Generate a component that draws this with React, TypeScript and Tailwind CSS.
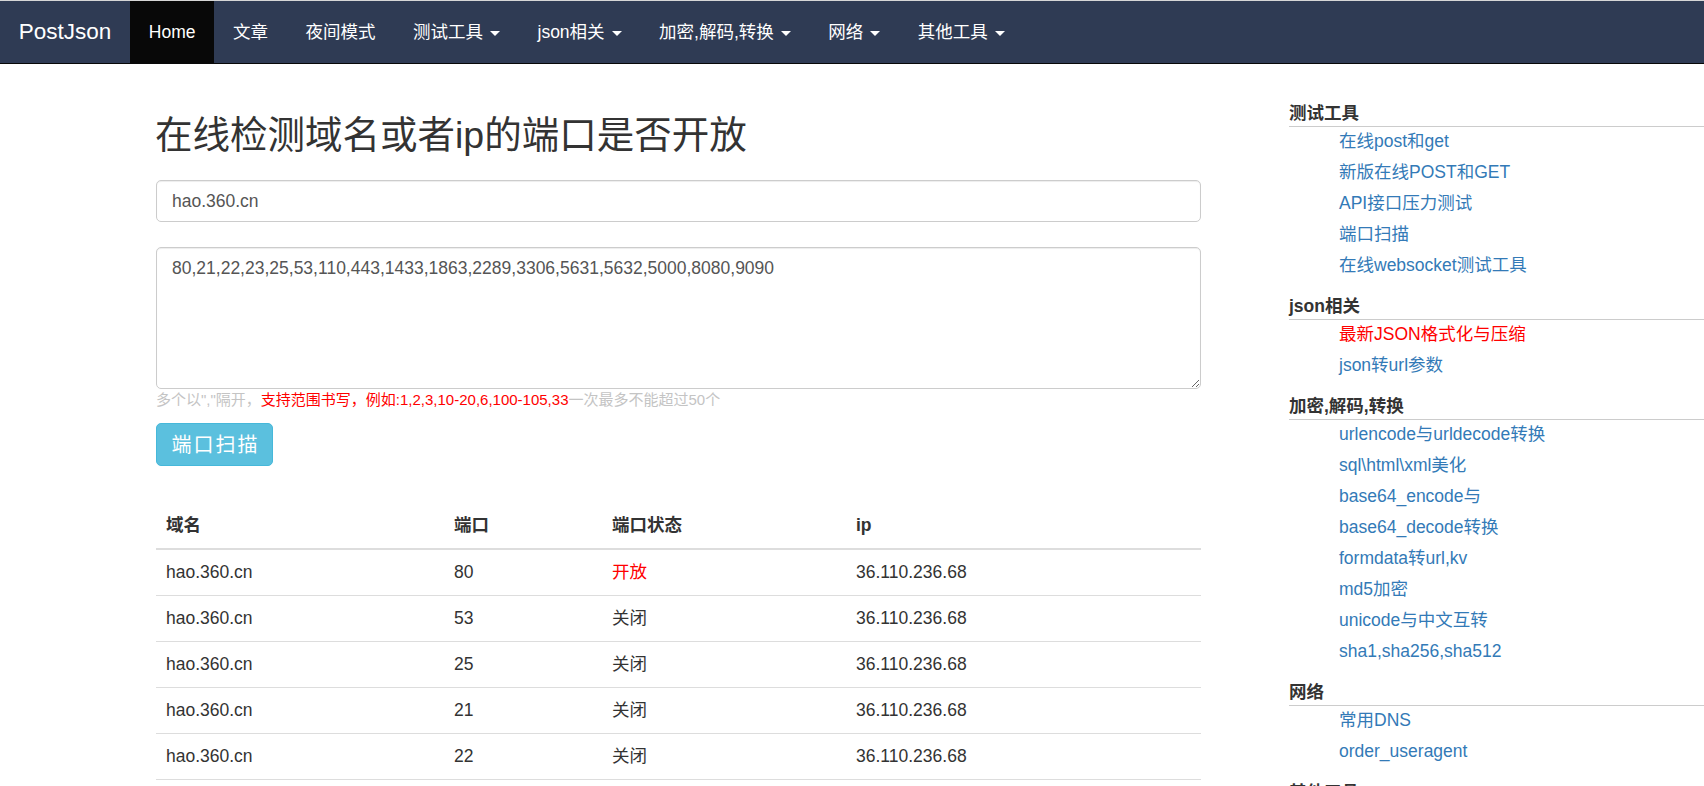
import React from "react";

const navItems = [
  { label: "文章", caret: false },
  { label: "夜间模式", caret: false },
  { label: "测试工具", caret: true },
  { label: "json相关", caret: true },
  { label: "加密,解码,转换", caret: true },
  { label: "网络", caret: true },
  { label: "其他工具", caret: true },
];

const rows = [
  { port: "80", open: true },
  { port: "53", open: false },
  { port: "25", open: false },
  { port: "21", open: false },
  { port: "22", open: false },
  { port: "23", open: false },
];

const groups = [
  {
    title: "测试工具",
    links: ["在线post和get", "新版在线POST和GET", "API接口压力测试", "端口扫描", "在线websocket测试工具"],
  },
  { title: "json相关", links: ["最新JSON格式化与压缩", "json转url参数"] },
  {
    title: "加密,解码,转换",
    links: [
      "urlencode与urldecode转换",
      "sql\\html\\xml美化",
      "base64_encode与",
      "base64_decode转换",
      "formdata转url,kv",
      "md5加密",
      "unicode与中文互转",
      "sha1,sha256,sha512",
    ],
  },
  { title: "网络", links: ["常用DNS", "order_useragent"] },
  { title: "其他工具", links: ["时间戳转换", "正则表达式测试"] },
];

export default function App() {
  return (
    <div className="min-h-screen bg-white text-[#333] font-['Liberation_Sans','Noto_Sans_CJK_SC',sans-serif]">
      {/* navbar */}
      <nav className="flex h-[64px] items-stretch border-t border-b border-t-[#d6d6d6] border-b-[#080808] bg-[#2f3b54] text-white">
        <a className="flex items-center px-[18.75px] text-[22.5px]">PostJson</a>
        <a className="flex items-center bg-[#080808] px-[18.75px] text-[17.5px]">Home</a>
        {navItems.map((item) => (
          <a key={item.label} className="flex items-center px-[18.75px] text-[17.5px]">
            {item.label}
            {item.caret && (
              <span className="ml-[7px] mt-[2px] inline-block h-0 w-0 border-x-[5px] border-t-[5px] border-x-transparent border-t-white" />
            )}
          </a>
        ))}
      </nav>

      <div className="flex">
        {/* main column */}
        <main className="ml-[156px] w-[1045px] shrink-0">
          <h1 className="mt-[51px] h-[41px] -ml-px text-[37.5px] font-normal leading-[41px] text-[#333]">
            在线检测域名或者ip的端口是否开放
          </h1>
          <input
            readOnly
            defaultValue="hao.360.cn"
            className="mt-[24px] block h-[42px] w-full rounded-[5px] border border-[#ccc] px-[15px] text-[17.5px] text-[#555] shadow-[inset_0_1px_1px_rgba(0,0,0,0.075)] outline-none"
          />
          <textarea
            readOnly
            defaultValue="80,21,22,23,25,53,110,443,1433,1863,2289,3306,5631,5632,5000,8080,9090"
            className="mt-[25px] block h-[142px] w-full rounded-[5px] border border-[#ccc] px-[15px] py-[7.5px] text-[17.5px] leading-[25px] text-[#555] shadow-[inset_0_1px_1px_rgba(0,0,0,0.075)] outline-none"
          />
          <p className="mt-[1px] h-[20px] text-[15px] leading-[20px] text-[#c4c4c4]">
            多个以","隔开，<span className="text-[#ff0000]">支持范围书写，例如:1,2,3,10-20,6,100-105,33</span>一次最多不能超过50个
          </p>
          <button className="mt-[13px] flex h-[43px] w-[117px] items-center justify-center rounded-[5px] border border-[#46b8da] bg-[#5bc0de] pl-[2px] text-[20px] tracking-[2px] text-white">
            端口扫描
          </button>

          <table className="mt-[37px] w-full border-collapse text-left text-[17.5px]">
            <thead>
              <tr className="border-b-2 border-[#ddd]">
                <th className="h-[46px] w-[288px] px-[10px] font-bold">域名</th>
                <th className="h-[46px] w-[158px] px-[10px] font-bold">端口</th>
                <th className="h-[46px] w-[244px] px-[10px] font-bold">端口状态</th>
                <th className="h-[46px] px-[10px] font-bold">ip</th>
              </tr>
            </thead>
            <tbody>
              {rows.map((r) => (
                <tr key={r.port} className="border-b border-[#ddd]">
                  <td className="h-[46px] px-[10px]">hao.360.cn</td>
                  <td className="h-[46px] px-[10px]">{r.port}</td>
                  <td className={r.open ? "h-[46px] px-[10px] text-[#ff0000]" : "h-[46px] px-[10px]"}>
                    {r.open ? "开放" : "关闭"}
                  </td>
                  <td className="h-[46px] px-[10px]">36.110.236.68</td>
                </tr>
              ))}
            </tbody>
          </table>
        </main>

        {/* sidebar */}
        <aside className="ml-[88px] mt-[36px] w-[415px] shrink-0">
          {groups.map((g, i) => (
            <div key={g.title} className={i === 0 ? "" : "mt-[11px]"}>
              <h4 className="h-[27px] border-b border-[#ccc] text-[17.5px] font-bold leading-[26px] text-[#333]">
                {g.title}
              </h4>
              <ul className="pl-[50px]">
                {g.links.map((l) => (
                  <li
                    key={l}
                    className={
                      l === "最新JSON格式化与压缩"
                        ? "h-[31px] text-[17.5px] leading-[29px] text-[#ff0000]"
                        : "h-[31px] text-[17.5px] leading-[29px] text-[#337ab7]"
                    }
                  >
                    {l}
                  </li>
                ))}
              </ul>
            </div>
          ))}
        </aside>
      </div>
    </div>
  );
}
